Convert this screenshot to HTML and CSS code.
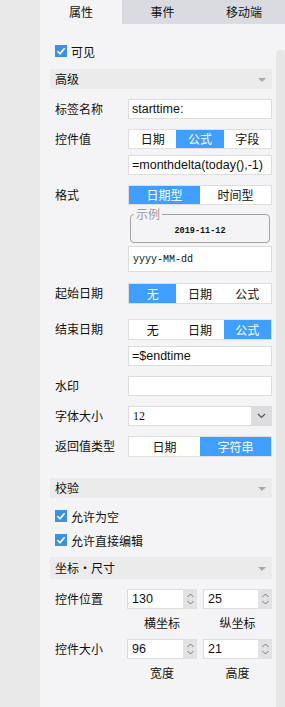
FILE: index.html
```html
<!DOCTYPE html>
<html lang="zh-CN">
<head>
    <meta charset="UTF-8" />
    <title>属性</title>
    <link rel="stylesheet" href="styles.css">
</head>
<body>
<div class="gutter"></div>
<div class="panel">
    <div class="tabs">
        <div class="tab tab--active">属性</div>
        <div class="tab">事件</div>
        <div class="tab">移动端</div>
    </div>
    <div class="panel__body">
        <div class="props">
            <label class="check check--first">
                <svg class="check__box" width="12" height="12" viewBox="0 0 12 12"><rect width="12" height="12" fill="#3d8fe8"/><path d="M2.5 6.2 L5 8.7 L9.6 3.2" fill="none" stroke="#fff" stroke-width="1.6"/></svg>
                <span>可见</span>
            </label>

            <div class="section section--first">高级<i class="section__arrow"></i></div>

            <div class="row row--first">
                <div class="row__label">标签名称</div>
                <div class="row__ctrl">
                    <input class="field" type="text" value="starttime:">
                </div>
            </div>

            <div class="row">
                <div class="row__label">控件值</div>
                <div class="row__ctrl">
                    <div class="seg">
                        <div class="seg__item">日期</div>
                        <div class="seg__item seg__item--on">公式</div>
                        <div class="seg__item">字段</div>
                    </div>
                    <input class="field field--after" type="text" value="=monthdelta(today(),-1)">
                </div>
            </div>

            <div class="row">
                <div class="row__label">格式</div>
                <div class="row__ctrl">
                    <div class="seg">
                        <div class="seg__item seg__item--on">日期型</div>
                        <div class="seg__item">时间型</div>
                    </div>
                    <fieldset class="sample">
                        <legend>示例</legend>
                        <div class="sample__text">2019-11-12</div>
                    </fieldset>
                    <input class="field field--mono" type="text" value="yyyy-MM-dd">
                </div>
            </div>

            <div class="row row--start">
                <div class="row__label">起始日期</div>
                <div class="row__ctrl">
                    <div class="seg seg--tall">
                        <div class="seg__item seg__item--on">无</div>
                        <div class="seg__item">日期</div>
                        <div class="seg__item">公式</div>
                    </div>
                </div>
            </div>

            <div class="row row--end">
                <div class="row__label">结束日期</div>
                <div class="row__ctrl">
                    <div class="seg seg--tall">
                        <div class="seg__item">无</div>
                        <div class="seg__item">日期</div>
                        <div class="seg__item seg__item--on">公式</div>
                    </div>
                    <input class="field field--after" type="text" value="=$endtime">
                </div>
            </div>

            <div class="row">
                <div class="row__label">水印</div>
                <div class="row__ctrl">
                    <input class="field" type="text" value="">
                </div>
            </div>

            <div class="row">
                <div class="row__label">字体大小</div>
                <div class="row__ctrl">
                    <div class="select">
                        <span class="select__val">12</span>
                        <span class="select__btn">
                            <svg width="9" height="6" viewBox="0 0 9 6"><path d="M1 1 L4.5 4.5 L8 1" fill="none" stroke="#555" stroke-width="1.2"/></svg>
                        </span>
                    </div>
                </div>
            </div>

            <div class="row">
                <div class="row__label">返回值类型</div>
                <div class="row__ctrl">
                    <div class="seg seg--tall">
                        <div class="seg__item">日期</div>
                        <div class="seg__item seg__item--on">字符串</div>
                    </div>
                </div>
            </div>

            <div class="section section--check">校验<i class="section__arrow"></i></div>

            <label class="check check--a">
                <svg class="check__box" width="12" height="12" viewBox="0 0 12 12"><rect width="12" height="12" fill="#3d8fe8"/><path d="M2.5 6.2 L5 8.7 L9.6 3.2" fill="none" stroke="#fff" stroke-width="1.6"/></svg>
                <span>允许为空</span>
            </label>
            <label class="check check--b">
                <svg class="check__box" width="12" height="12" viewBox="0 0 12 12"><rect width="12" height="12" fill="#3d8fe8"/><path d="M2.5 6.2 L5 8.7 L9.6 3.2" fill="none" stroke="#fff" stroke-width="1.6"/></svg>
                <span>允许直接编辑</span>
            </label>

            <div class="section section--pos">坐标・尺寸<i class="section__arrow"></i></div>

            <div class="row row--pos">
                <div class="row__label">控件位置</div>
                <div class="pair">
                    <div class="pair__col">
                        <div class="spin">
                            <input class="spin__input" type="text" value="130">
                            <span class="spin__btn">
                                <svg width="9" height="16" viewBox="0 0 9 16"><path d="M1.5 6 L4.5 3 L7.5 6 M1.5 10 L4.5 13 L7.5 10" fill="none" stroke="#777" stroke-width="1"/></svg>
                            </span>
                        </div>
                        <div class="pair__cap">横坐标</div>
                    </div>
                    <div class="pair__col">
                        <div class="spin">
                            <input class="spin__input" type="text" value="25">
                            <span class="spin__btn">
                                <svg width="9" height="16" viewBox="0 0 9 16"><path d="M1.5 6 L4.5 3 L7.5 6 M1.5 10 L4.5 13 L7.5 10" fill="none" stroke="#777" stroke-width="1"/></svg>
                            </span>
                        </div>
                        <div class="pair__cap">纵坐标</div>
                    </div>
                </div>
            </div>

            <div class="row row--size">
                <div class="row__label">控件大小</div>
                <div class="pair">
                    <div class="pair__col">
                        <div class="spin">
                            <input class="spin__input" type="text" value="96">
                            <span class="spin__btn">
                                <svg width="9" height="16" viewBox="0 0 9 16"><path d="M1.5 6 L4.5 3 L7.5 6 M1.5 10 L4.5 13 L7.5 10" fill="none" stroke="#777" stroke-width="1"/></svg>
                            </span>
                        </div>
                        <div class="pair__cap">宽度</div>
                    </div>
                    <div class="pair__col">
                        <div class="spin">
                            <input class="spin__input" type="text" value="21">
                            <span class="spin__btn">
                                <svg width="9" height="16" viewBox="0 0 9 16"><path d="M1.5 6 L4.5 3 L7.5 6 M1.5 10 L4.5 13 L7.5 10" fill="none" stroke="#777" stroke-width="1"/></svg>
                            </span>
                        </div>
                        <div class="pair__cap">高度</div>
                    </div>
                </div>
            </div>
        </div>
        <div class="scrollbar">
            <div class="scrollbar__track"></div>
        </div>
    </div>
</div>
</body>
</html>
```

FILE: styles.css
```css
*,
*::before,
*::after {
    box-sizing: border-box;
}

html,
body {
    margin: 0;
    padding: 0;
}

body {
    font-family: "Noto Sans CJK SC", "Liberation Sans", sans-serif;
    font-size: 12px;
    color: #111;
    background: #e9e9e9;
    display: flex;
    width: 285px;
    height: 707px;
    overflow: hidden;
}

.gutter {
    width: 40px;
    flex: none;
}

.panel {
    width: 245px;
    background: #f4f4f6;
    display: flex;
    flex-direction: column;
}

.tabs {
    display: flex;
    height: 24px;
    background: #dadbe0;
}
.tab {
    width: 81px;
    text-align: center;
    line-height: 24px;
    font-size: 12px;
}
.tab:first-child,
.tab:last-child {
    width: 82px;
}
.tab--active {
    background: #f4f4f6;
}

.panel__body {
    flex: 1;
    display: flex;
}
.props {
    width: 236px;
    padding: 0 4px 0 10px;
}
.scrollbar {
    width: 9px;
    padding-top: 26px;
}
.scrollbar__track {
    height: 100%;
    background: #e6e6e7;
    border-radius: 4px 4px 0 0;
}

/* checkboxes */
.check {
    display: flex;
    align-items: center;
    height: 20px;
    padding-left: 5px;
    font-size: 12px;
}
.check__box {
    margin-right: 4px;
    flex: none;
}
.check--first {
    margin-top: 17px;
}
.check--a {
    margin-top: 8px;
}
.check--b {
    margin-top: 4px;
}

/* section headers */
.section {
    height: 20px;
    line-height: 20px;
    background: #ebebeb;
    padding-left: 5px;
    position: relative;
    font-size: 12px;
}
.section__arrow {
    position: absolute;
    right: 6px;
    top: 9px;
    border-left: 4px solid transparent;
    border-right: 4px solid transparent;
    border-top: 4px solid #aaa;
}
.section--first {
    margin-top: 8px;
}
.section--check {
    margin-top: 21px;
}
.section--pos {
    margin-top: 7px;
    height: 22px;
    line-height: 22px;
}
.section--pos .section__arrow {
    top: 10px;
}

/* rows */
.row {
    display: flex;
    margin-top: 10px;
}
.row--start {
    margin-top: 11px;
}
.row--end {
    margin-top: 15px;
}
.row__label {
    width: 78px;
    padding-left: 5px;
    line-height: 19px;
    font-size: 12px;
    white-space: nowrap;
}
.row__ctrl {
    width: 144px;
}

.field {
    display: block;
    width: 100%;
    height: 20px;
    margin: 0;
    border: 1px solid #dcdcdc;
    background: #fff;
    padding: 0 3px;
    font-family: "Liberation Sans", sans-serif;
    font-size: 12.5px;
    color: #111;
    outline: none;
}
.field--after {
    margin-top: 6px;
}
.field--mono {
    height: 26px;
    margin-top: 3px;
    font-family: "Liberation Mono", monospace;
    font-size: 10px;
    padding-left: 4px;
}

/* segmented buttons */
.seg {
    display: flex;
    height: 20px;
    border: 1px solid #dedede;
    background: #fff;
}
.seg--tall {
    height: 21px;
}
.seg__item {
    flex: 1;
    text-align: center;
    font-size: 12px;
    line-height: 18px;
}
.seg--tall .seg__item {
    line-height: 19px;
}
.seg__item--on {
    background: #409eff;
    color: #fff;
}

/* sample box */
.sample {
    margin: 2px 2px 0;
    padding: 0 0 5px;
    border: 1px solid #a3a3a3;
    border-radius: 4px;
}
.sample legend {
    margin-left: 3px;
    padding: 0 2px;
    font-size: 12px;
    line-height: 14px;
    color: #999;
}
.sample__text {
    margin-top: 4px;
    line-height: 12px;
    text-align: center;
    font-family: "Liberation Mono", monospace;
    font-size: 8.5px;
    font-weight: bold;
}

/* select */
.select {
    display: flex;
    height: 20px;
    border: 1px solid #dcdcdc;
    background: #fff;
}
.select__val {
    flex: 1;
    padding-left: 4px;
    line-height: 18px;
    font-family: "Liberation Serif", serif;
    font-size: 12px;
}
.select__btn {
    width: 20px;
    background: #dddddf;
    display: flex;
    align-items: center;
    justify-content: center;
}

/* position / size */
.row--pos {
    margin-top: 10px;
}
.row--size {
    margin-top: 3px;
}
.row--pos .row__label,
.row--size .row__label {
    width: 77px;
}
.pair {
    display: flex;
    gap: 6px;
}
.pair__col {
    width: 70px;
}
.pair__col + .pair__col {
    width: 69px;
}
.spin {
    display: flex;
    height: 20px;
}
.spin__input {
    flex: 1;
    min-width: 0;
    height: 20px;
    margin: 0;
    border: 1px solid #dcdcdc;
    border-right: none;
    padding: 0 4px;
    font-family: "Liberation Sans", sans-serif;
    font-size: 12.5px;
    color: #111;
    outline: none;
}
.spin__btn {
    width: 14px;
    background: #e2e2e4;
    display: flex;
    align-items: center;
    justify-content: center;
}
.pair__cap {
    text-align: center;
    line-height: 27px;
    font-size: 12px;
}
```
